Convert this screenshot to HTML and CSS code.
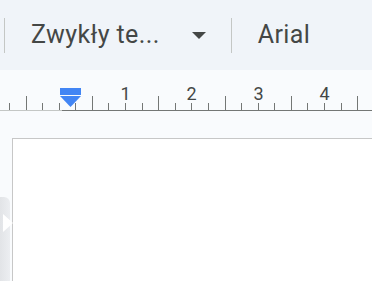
FILE: index.html
```html
<!DOCTYPE html>
<html lang="pl">
<head>
    <meta charset="UTF-8">
    <title>Dokument</title>
    <link rel="stylesheet" href="styles.css">
</head>
<body>
<div class="toolbar">
    <span class="sep"></span>
    <div class="style-select">
        <span class="label">Zwykły te...</span>
        <svg class="caret" width="14" height="7" viewBox="0 0 14 7"><polygon points="0,0 14,0 7,7" fill="#444746"/></svg>
    </div>
    <span class="sep"></span>
    <div class="font-select">
        <span class="label">Arial</span>
    </div>
</div>
<div class="ruler">
    <svg id="rulerSvg" width="372" height="41" viewBox="0 0 372 41"></svg>
</div>
<div class="canvas">
    <div class="outline-tab">
        <svg width="10" height="18" viewBox="0 0 10 18"><polygon points="0,0 10,9 0,18" fill="#fff"/></svg>
    </div>
    <div class="page"></div>
</div>
<script>
    // 生成标尺刻度
    var oSvg = document.getElementById("rulerSvg");
    var zero = 58.7;
    var quarter = 16.58;
    var html = "";
    html += '<line x1="0" y1="40.5" x2="62" y2="40.5" stroke="#c4c7c5"/>';
    html += '<line x1="62" y1="40.5" x2="372" y2="40.5" stroke="#747775"/>';
    for (var k = -3; k <= 19; k++) {
        var tickX = Math.round(zero + k * quarter) + 0.5;
        var tickTop = (((k % 4) + 4) % 4 === 2) ? 26 : 33;
        html += '<line x1="' + tickX + '" y1="' + tickTop + '" x2="' + tickX + '" y2="40" stroke="#747775"/>';
        if (k > 0 && k % 4 === 0) {
            html += '<text x="' + tickX + '" y="30" text-anchor="middle">' + (k / 4) + '</text>';
        }
    }
    // 缩进标记
    html += '<rect x="60" y="18" width="21" height="7" fill="#4285f4"/>';
    html += '<polygon points="60,26 81,26 70.5,37" fill="#4285f4"/>';
    oSvg.innerHTML = html;
</script>
</body>
</html>
```

FILE: styles.css
```css
*{
    margin: 0;
    padding: 0;
}
html, body{
    width: 372px;
    height: 281px;
    overflow: hidden;
}
body{
    background: #f9fbfd;
    font-family: Roboto, "Liberation Sans", Arial, sans-serif;
    color: #444746;
}
.toolbar{
    height: 70px;
    background: #f0f4f9;
    display: flex;
    align-items: center;
    padding-left: 4px;
}
.sep{
    width: 1px;
    height: 35px;
    background: #c4c7c5;
}
.style-select{
    display: flex;
    align-items: center;
    margin-left: 26px;
}
.label{
    font-size: 25px;
    line-height: 30px;
    letter-spacing: 0.4px;
}
.caret{
    display: block;
    margin-left: 32px;
    margin-right: 25px;
}
.font-select{
    margin-left: 26px;
}
.ruler{
    height: 41px;
}
.ruler svg{
    display: block;
}
.ruler text{
    font-family: Roboto, "Liberation Sans", Arial, sans-serif;
    font-size: 18px;
    fill: #444746;
}
.canvas{
    position: relative;
    padding: 27px 0 0 12px;
}
.page{
    width: 420px;
    height: 300px;
    background: #fff;
    border: 1px solid #c7c7c7;
}
.outline-tab{
    position: absolute;
    left: 0;
    top: 86px;
    width: 10px;
    height: 100px;
    background: linear-gradient(to right, #e2e4e7, #eceef1);
    border-radius: 0 6px 0 0;
    display: flex;
    align-items: flex-start;
    padding-top: 17px;
    padding-left: 3px;
    box-sizing: border-box;
    overflow: visible;
}
.outline-tab svg{
    display: block;
    flex-shrink: 0;
}
```
